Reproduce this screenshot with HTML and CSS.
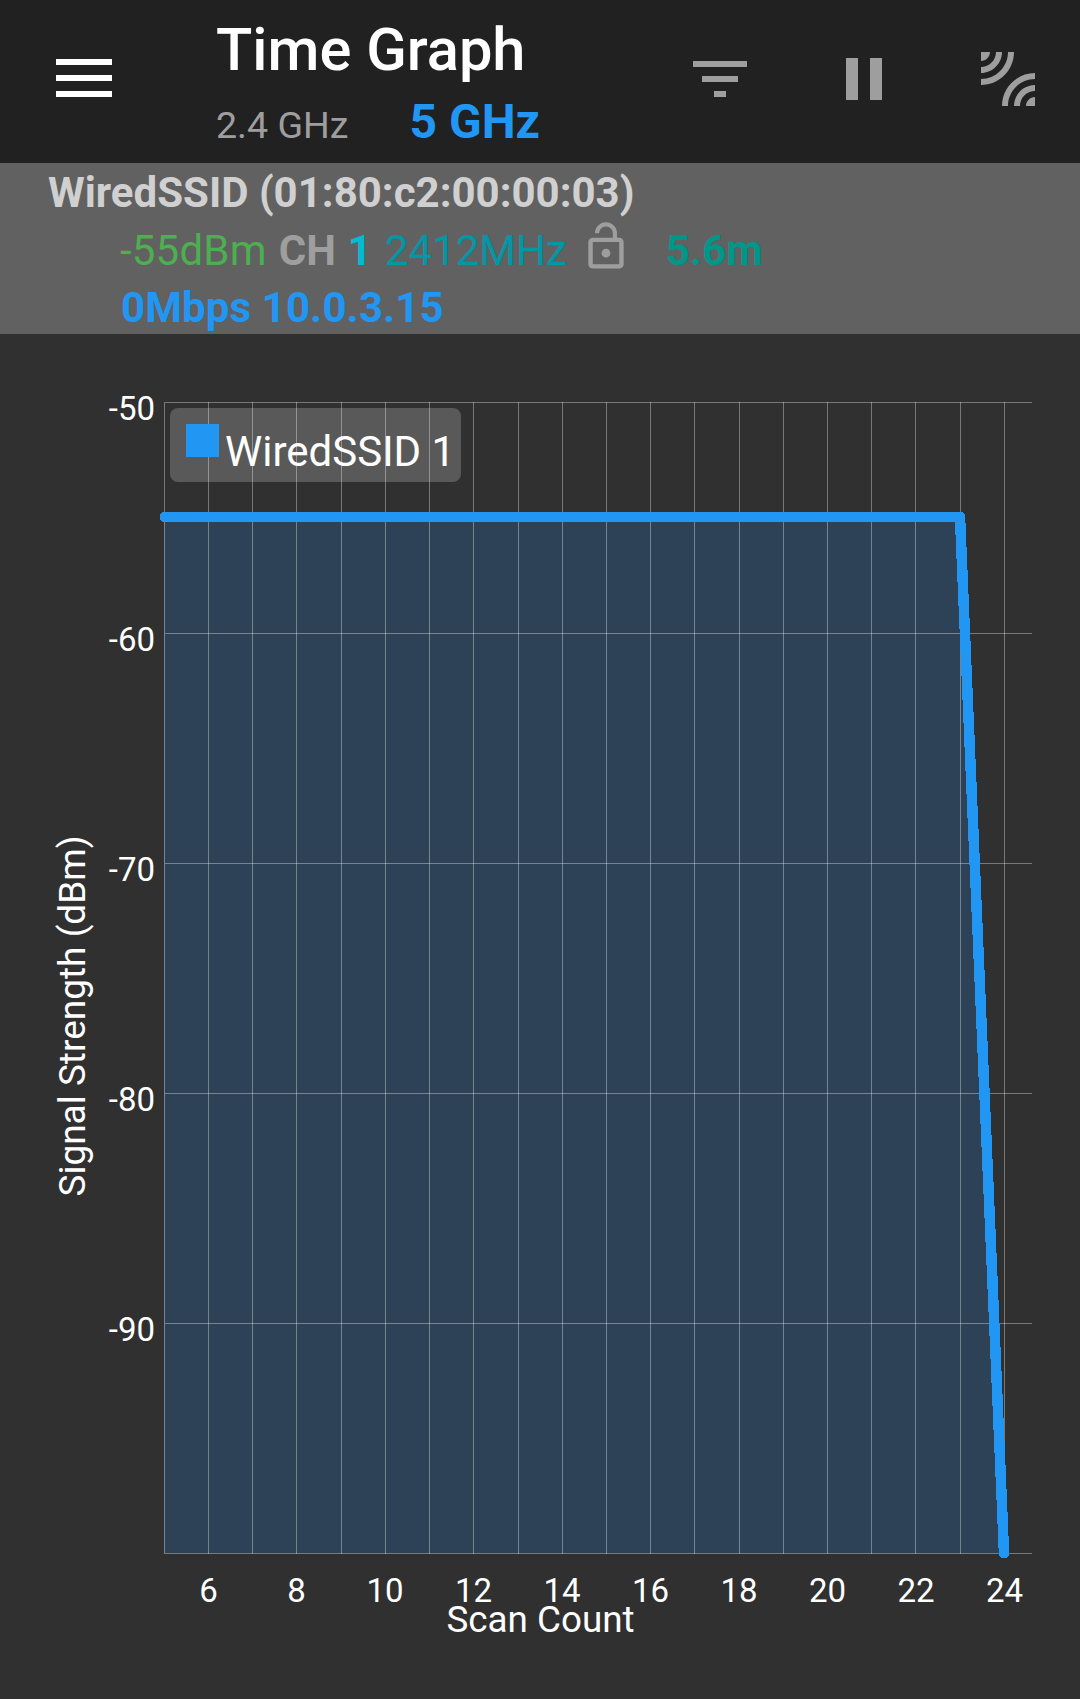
FILE: index.html
```html
<!DOCTYPE html>
<html lang="en">
<head>
  <meta charset="UTF-8">
  <title>Time Graph</title>
  <link rel="stylesheet" href="styles.css">
</head>
<body>

  <header class="toolbar">
    <svg class="menu-icon" viewBox="0 0 56 38"><path d="M0 0h56v6H0zM0 16h56v6H0zM0 32h56v6H0z"/></svg>
    <div class="heading">
      <div class="title">Time Graph</div>
      <div class="bands">
        <span class="band">2.4 GHz</span>
        <span class="band band-active">5 GHz</span>
      </div>
    </div>
    <div class="actions">
      <svg class="action" viewBox="0 0 24 24"><path d="M10 18h4v-2h-4v2zM3 6v2h18V6H3zm3 7h12v-2H6v2z"/></svg>
      <svg class="action" viewBox="0 0 24 24"><path d="M6 19h4V5H6v14zm8-14v14h4V5h-4z"/></svg>
      <svg class="action" viewBox="0 0 24 24"><path d="M6 3H3v3c1.66 0 3-1.34 3-3zm8 0h-2c0 4.97-4.03 9-9 9v2c6.08 0 11-4.93 11-11zm-4 0H8c0 2.76-2.24 5-5 5v2c3.87 0 7-3.13 7-7zm0 18h2c0-4.97 4.03-9 9-9v-2c-6.07 0-11 4.93-11 11zm8 0h3v-3c-1.66 0-3 1.34-3 3zm-4 0h2c0-2.76 2.24-5 5-5v-2c-3.87 0-7 3.13-7 7z"/></svg>
    </div>
  </header>

  <section class="info">
    <div class="ssid">WiredSSID (01:80:c2:00:00:03)</div>
    <div class="row">
      <span class="level">-55dBm</span>
      <span class="ch">CH</span>
      <span class="chnum">1</span>
      <span class="freq">2412MHz</span>
      <svg class="lock" viewBox="0 0 24 24"><path d="M12 17c1.1 0 2-.9 2-2s-.9-2-2-2-2 .9-2 2 .9 2 2 2zm6-9h-1V6c0-2.76-2.24-5-5-5S7 3.24 7 6h1.9c0-1.71 1.39-3.1 3.1-3.1 1.71 0 3.1 1.39 3.1 3.1v2H6c-1.1 0-2 .9-2 2v10c0 1.1.9 2 2 2h12c1.1 0 2-.9 2-2V10c0-1.1-.9-2-2-2zm0 12H6V10h12v10z"/></svg>
      <span class="dist">5.6m</span>
    </div>
    <div class="row link">0Mbps 10.0.3.15</div>
  </section>

  <svg class="chart" viewBox="0 334 1080 1365">
    <polygon class="area" points="164,517 960,517 1004,1553 164,1553"/>

    <path class="grid" d="M164.5 402v1152M208.5 402v1152M252.5 402v1152M296.5 402v1152M341.5 402v1152M385.5 402v1152M429.5 402v1152M473.5 402v1152M518.5 402v1152M562.5 402v1152M606.5 402v1152M650.5 402v1152M694.5 402v1152M739.5 402v1152M783.5 402v1152M827.5 402v1152M871.5 402v1152M915.5 402v1152M960.5 402v1152M1004.5 402v1152"/>
    <path class="grid" d="M165 402.5h867M165 633.5h867M165 863.5h867M165 1093.5h867M165 1323.5h867M165 1553.5h867"/>

    <polyline class="series" points="165,517 960,517 1004,1553"/>

    <g class="ylabels">
      <text x="155" y="420">-50</text>
      <text x="155" y="651">-60</text>
      <text x="155" y="881">-70</text>
      <text x="155" y="1111">-80</text>
      <text x="155" y="1341">-90</text>
    </g>
    <g class="xlabels">
      <text x="208.5" y="1602">6</text>
      <text x="296.5" y="1602">8</text>
      <text x="385" y="1602">10</text>
      <text x="473.5" y="1602">12</text>
      <text x="562" y="1602">14</text>
      <text x="650.5" y="1602">16</text>
      <text x="739" y="1602">18</text>
      <text x="827.5" y="1602">20</text>
      <text x="916" y="1602">22</text>
      <text x="1004.5" y="1602">24</text>
    </g>
    <text class="axis-title scan" x="540.5" y="1632">Scan Count</text>
    <text class="axis-title" transform="translate(85 1016) rotate(-90)">Signal Strength (dBm)</text>

    <rect class="legend" x="170" y="408" width="291" height="74" rx="8"/>
    <rect class="swatch" x="186" y="424" width="33" height="33"/>
    <text class="legend-text" x="225" y="466">WiredSSID 1</text>
  </svg>

</body>
</html>
```

FILE: styles.css
```css
body {
  margin: 0;
  width: 1080px;
  height: 1699px;
  overflow: hidden;
  background: #303030;
  font-family: Roboto, sans-serif;
  color: #fff;
  display: flex;
  flex-direction: column;
}

.toolbar {
  height: 163px;
  flex: none;
  background: #212121;
  display: flex;
  align-items: flex-start;
}
.menu-icon {
  width: 56px;
  height: 38px;
  fill: #fff;
  margin: 59px 0 0 56px;
}
.heading {
  margin-left: 104px;
}
.title {
  font-size: 59.6px;
  font-weight: 500;
  line-height: 70px;
  margin-top: 15px;
}
.bands {
  display: flex;
  gap: 61px;
  align-items: baseline;
  font-size: 37.6px;
  color: #9e9e9e;
  line-height: 50px;
  margin-top: 12px;
}
.band-active {
  font-size: 48px;
  font-weight: 700;
  color: #2196f3;
}
.actions {
  margin-left: auto;
  margin-right: 36px;
  margin-top: 43px;
  display: flex;
  gap: 72px;
}
.action {
  width: 72px;
  height: 72px;
  fill: #9e9e9e;
}

.info {
  height: 171px;
  flex: none;
  background: #616161;
  padding-left: 48px;
  font-size: 42px;
}
.ssid {
  font-weight: 700;
  color: #d0d0d0;
  line-height: 50px;
  padding-top: 5px;
  margin-bottom: 4px;
}
.row {
  display: flex;
  align-items: baseline;
  margin-left: 72px;
  gap: 13px;
  height: 57px;
  line-height: 58px;
}
.level { color: #4caf50; letter-spacing: 0.2px; }
.ch { color: #9e9e9e; font-weight: 700; margin-left: -1px; }
.chnum { color: #00bcd4; font-weight: 700; margin-left: -1px; }
.freq { color: #0097a7; }
.dist { color: #009688; font-weight: 700; margin-left: 21px; }
.lock {
  width: 54px;
  height: 53px;
  fill: #9e9e9e;
  align-self: flex-start;
  margin: -2px -1px 0 -1px;
}
.link {
  color: #2196f3;
  font-weight: 700;
  margin-left: 73px;
  letter-spacing: 0.1px;
}

.chart {
  display: block;
  width: 1080px;
  height: 1365px;
  flex: none;
}
.area { fill: #2d4257; }
.grid {
  fill: none;
  stroke: #fff;
  stroke-opacity: 0.35;
  stroke-width: 1;
  shape-rendering: crispEdges;
}
.series {
  fill: none;
  stroke: #2196f3;
  stroke-width: 10.5;
  stroke-linejoin: round;
  stroke-linecap: round;
  shape-rendering: crispEdges;
}
.ylabels text, .xlabels text, .axis-title, .legend-text {
  font-family: Roboto, sans-serif;
  fill: #fff;
}
.ylabels text { font-size: 33px; text-anchor: end; }
.xlabels text { font-size: 33px; text-anchor: middle; }
.axis-title { font-size: 37px; text-anchor: middle; }
.scan { font-size: 36.8px; }
.legend { fill: #fff; fill-opacity: 0.2; }
.swatch { fill: #2196f3; }
.legend-text { font-size: 42px; }
```
